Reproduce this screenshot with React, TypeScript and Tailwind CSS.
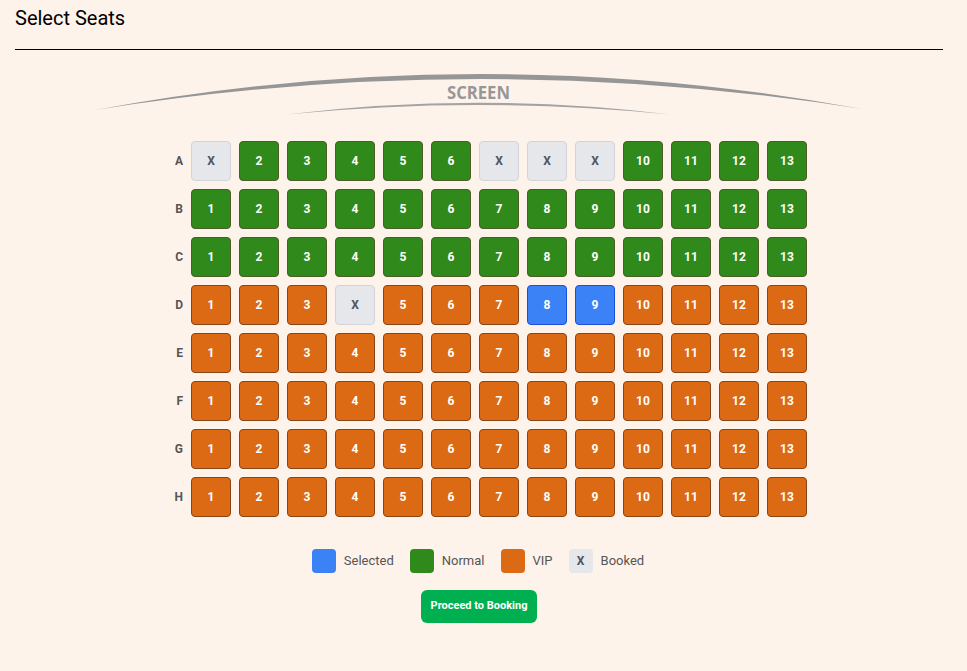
import React, { useState } from 'react'

type SeatKind = 'normal' | 'vip'

const rows = ['A', 'B', 'C', 'D', 'E', 'F', 'G', 'H']
const seatNumbers = Array.from({ length: 13 }, (_, i) => i + 1)

const booked: Record<string, boolean> = {
  A1: true, A7: true, A8: true, A9: true,
  D4: true,
}

function kindOf(row: string): SeatKind {
  return row === 'A' || row === 'B' || row === 'C' ? 'normal' : 'vip'
}

function Seat({ id, label, kind, isBooked, isSelected, onToggle }: {
  id: string,
  label: number,
  kind: SeatKind,
  isBooked: boolean,
  isSelected: boolean,
  onToggle: (id: string) => void,
}) {
  let cls = 'bg-[#308a1b] border-[#4b5e26] text-white'
  if (isBooked) cls = 'bg-[#e5e7eb] border-[#d1d5db] text-[#4b5563] cursor-not-allowed'
  else if (isSelected) cls = 'bg-[#3b82f6] border-[#1d4ed8] text-white'
  else if (kind === 'vip') cls = 'bg-[#dc6a14] border-[#8b4513] text-white'

  return (
    <button
      onClick={() => !isBooked && onToggle(id)}
      className={`w-10 h-10 rounded border flex items-center justify-center text-xs font-bold ${cls}`}
    >
      {isBooked ? 'X' : label}
    </button>
  )
}

function Screen() {
  return (
    <svg width="928" height="60" viewBox="15 60 928 60" className="block">
      <path d="M95 110 Q478 38.5 862 109 Q478 48.5 95 110 Z" fill="#969696" />
      <path d="M286 114.5 Q478 91 670 114.5 Q478 95.5 286 114.5 Z" fill="#a3a3a3" />
      <text
        x="447"
        y="98.5"
        textLength="63"
        lengthAdjust="spacingAndGlyphs"
        fill="#979797"
        fontFamily="'Open Sans', sans-serif"
        fontWeight="700"
        fontSize="17"
      >
        SCREEN
      </text>
    </svg>
  )
}

export default function App() {
  const [selected, setSelected] = useState<string[]>(['D8', 'D9'])

  const toggle = (id: string) => {
    setSelected(s => s.includes(id) ? s.filter(x => x !== id) : [...s, id])
  }

  return (
    <div className="min-h-[671px] bg-[#fef3eb] pl-[15px] pr-[24px] pt-1 font-['Roboto',sans-serif]">
      <div className="border-b border-black pb-[17px]">
        <h2 className="text-xl leading-7 text-black">Select Seats</h2>
      </div>

      <div className="mt-[10px]">
        <Screen />
      </div>

      <div className="mt-[21px] flex flex-col items-center gap-2">
        {rows.map(row => (
          <div key={row} className="flex items-center gap-2">
            <div className="w-8 text-right text-xs font-bold text-[#555]">{row}</div>
            {seatNumbers.map(n => {
              const id = row + n
              return (
                <Seat
                  key={id}
                  id={id}
                  label={n}
                  kind={kindOf(row)}
                  isBooked={!!booked[id]}
                  isSelected={selected.includes(id)}
                  onToggle={toggle}
                />
              )
            })}
          </div>
        ))}
      </div>

      <div className="mt-[32px] flex justify-center gap-4 text-[13px] text-[#555] pr-[2px]">
        <div className="flex items-center gap-2">
          <span className="w-6 h-6 rounded bg-[#3b82f6]" />
          <span>Selected</span>
        </div>
        <div className="flex items-center gap-2">
          <span className="w-6 h-6 rounded bg-[#308a1b]" />
          <span>Normal</span>
        </div>
        <div className="flex items-center gap-2">
          <span className="w-6 h-6 rounded bg-[#dc6a14]" />
          <span>VIP</span>
        </div>
        <div className="flex items-center gap-2">
          <span className="w-6 h-6 rounded bg-[#e5e7eb] flex items-center justify-center text-xs font-bold text-[#4b5563]">X</span>
          <span>Booked</span>
        </div>
      </div>

      <div className="mt-[17px] flex justify-center">
        <button className="h-[33px] px-[10px] rounded-md bg-[#00b050] text-white text-[11px] font-bold">
          Proceed to Booking
        </button>
      </div>
    </div>
  )
}
